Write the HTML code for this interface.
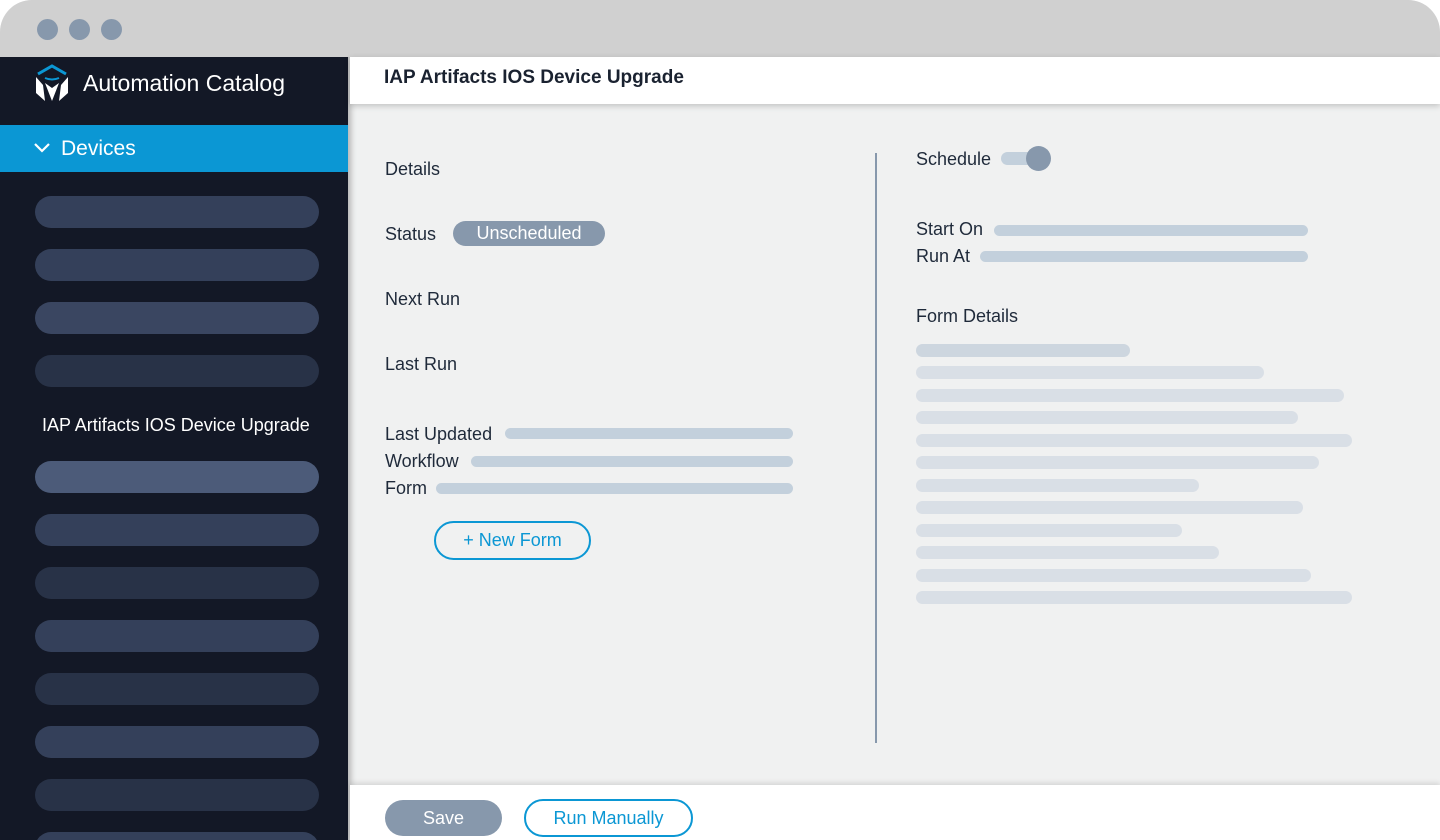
<!DOCTYPE html><html><head><style>
*{margin:0;padding:0;box-sizing:border-box}
body{width:1440px;height:840px;background:#fff;font-family:"Liberation Sans",sans-serif;position:relative;overflow:hidden}
.a{position:absolute}
.win{left:0;top:0;width:1440px;height:840px;border-radius:32px 32px 0 0;background:#d0d0d0;overflow:hidden}
.dot{width:21px;height:21px;border-radius:50%;background:#8798ac;top:19px}
.pill{left:35px;width:284px;height:32px;border-radius:16px}
.bar{height:11px;border-radius:6px;background:#c3d0dc}
.fb{height:13px;border-radius:7px;background:#d9dfe6;left:916px}
.t{font-size:18px;color:#1f2a3a}
</style></head><body>
<div class="a win">
<div class="a dot" style="left:37px"></div><div class="a dot" style="left:69px"></div><div class="a dot" style="left:101px"></div>
<div class="a" style="left:0;top:57px;width:348px;height:783px;background:#131826"></div>
<svg class="a" style="left:33px;top:63px" width="38" height="42" viewBox="0 0 38 42"><path d="M5 11 L19 3 L33 11" fill="none" stroke="#0b97d4" stroke-width="3"/><path d="M3 14 L3 30 L12 38 L10 22 Z M35 14 L35 30 L26 38 L28 22 Z M12 20 L19 38 L26 20 L19 25Z" fill="#fff"/><path d="M12 15 Q19 18 26 15" fill="none" stroke="#0b97d4" stroke-width="2"/></svg>
<div class="a" style="left:83px;top:70px;font-size:23px;color:#fff">Automation Catalog</div>
<div class="a" style="left:0;top:125px;width:348px;height:47px;background:#0b97d4"></div>
<svg class="a" style="left:33px;top:142px" width="18" height="12"><path d="M2 2 L9 9 L16 2" fill="none" stroke="#fff" stroke-width="2.2"/></svg>
<div class="a" style="left:61px;top:137px;font-size:21px;color:#fff">Devices</div>
<div class="a pill" style="top:196px;background:#34405a"></div>
<div class="a pill" style="top:249px;background:#34405a"></div>
<div class="a pill" style="top:302px;background:#3a4661"></div>
<div class="a pill" style="top:355px;background:#283247"></div>
<div class="a" style="left:42px;top:415px;font-size:18px;color:#fff">IAP Artifacts IOS Device Upgrade</div>
<div class="a pill" style="top:461px;background:#4c5b79"></div>
<div class="a pill" style="top:514px;background:#34405a"></div>
<div class="a pill" style="top:567px;background:#283247"></div>
<div class="a pill" style="top:620px;background:#34405a"></div>
<div class="a pill" style="top:673px;background:#283247"></div>
<div class="a pill" style="top:726px;background:#34405a"></div>
<div class="a pill" style="top:779px;background:#283247"></div>
<div class="a pill" style="top:832px;background:#34405a"></div>
<div class="a" style="left:348px;top:57px;width:1092px;height:783px;background:#f0f1f1;box-shadow:inset 6px 0 6px -3px rgba(0,0,0,.25)"></div>
<div class="a" style="left:350px;top:57px;width:1090px;height:47px;background:#fff;box-shadow:0 2px 6px rgba(0,0,0,.2)"></div>
<div class="a" style="left:384px;top:67px;font-size:19px;font-weight:bold;color:#1a2230">IAP Artifacts IOS Device Upgrade</div>
<div class="a" style="left:350px;top:785px;width:1090px;height:55px;background:#fff;box-shadow:0 -2px 5px rgba(0,0,0,.12)"></div>
<div class="a" style="left:385px;top:800px;width:117px;height:36px;border-radius:18px;background:#8798ac;color:#fff;font-size:18px;text-align:center;line-height:36px">Save</div>
<div class="a" style="left:524px;top:799px;width:169px;height:38px;border-radius:19px;border:2px solid #0b97d4;color:#0b97d4;font-size:18px;text-align:center;line-height:34px">Run Manually</div>
<div class="a t" style="left:385px;top:159px">Details</div>
<div class="a t" style="left:385px;top:224px">Status</div>
<div class="a" style="left:453px;top:221px;width:152px;height:25px;border-radius:13px;background:#8798ac;color:#fff;font-size:18px;text-align:center;line-height:25px">Unscheduled</div>
<div class="a t" style="left:385px;top:289px">Next Run</div>
<div class="a t" style="left:385px;top:354px">Last Run</div>
<div class="a t" style="left:385px;top:424px">Last Updated</div><div class="a bar" style="left:505px;top:428px;width:288px"></div>
<div class="a t" style="left:385px;top:451px">Workflow</div><div class="a bar" style="left:471px;top:456px;width:322px"></div>
<div class="a t" style="left:385px;top:478px">Form</div><div class="a bar" style="left:436px;top:483px;width:357px"></div>
<div class="a" style="left:434px;top:521px;width:157px;height:39px;border-radius:20px;border:2px solid #0b97d4;color:#0b97d4;font-size:18px;text-align:center;line-height:35px">+ New Form</div>
<div class="a" style="left:875px;top:153px;width:2px;height:590px;background:#8798ac"></div>
<div class="a t" style="left:916px;top:149px">Schedule</div>
<div class="a" style="left:1001px;top:152px;width:46px;height:13px;border-radius:7px;background:#c3d0dc"></div>
<div class="a" style="left:1026px;top:146px;width:25px;height:25px;border-radius:50%;background:#8798ac"></div>
<div class="a t" style="left:916px;top:219px">Start On</div><div class="a bar" style="left:994px;top:225px;width:314px"></div>
<div class="a t" style="left:916px;top:246px">Run At</div><div class="a bar" style="left:980px;top:251px;width:328px"></div>
<div class="a t" style="left:916px;top:306px">Form Details</div>
<div class="a fb" style="top:344px;width:214px;background:#cdd6df"></div>
<div class="a fb" style="top:366px;width:348px"></div>
<div class="a fb" style="top:389px;width:428px"></div>
<div class="a fb" style="top:411px;width:382px"></div>
<div class="a fb" style="top:434px;width:436px"></div>
<div class="a fb" style="top:456px;width:403px"></div>
<div class="a fb" style="top:479px;width:283px"></div>
<div class="a fb" style="top:501px;width:387px"></div>
<div class="a fb" style="top:524px;width:266px"></div>
<div class="a fb" style="top:546px;width:303px"></div>
<div class="a fb" style="top:569px;width:395px"></div>
<div class="a fb" style="top:591px;width:436px"></div>
</div>
</body></html>
